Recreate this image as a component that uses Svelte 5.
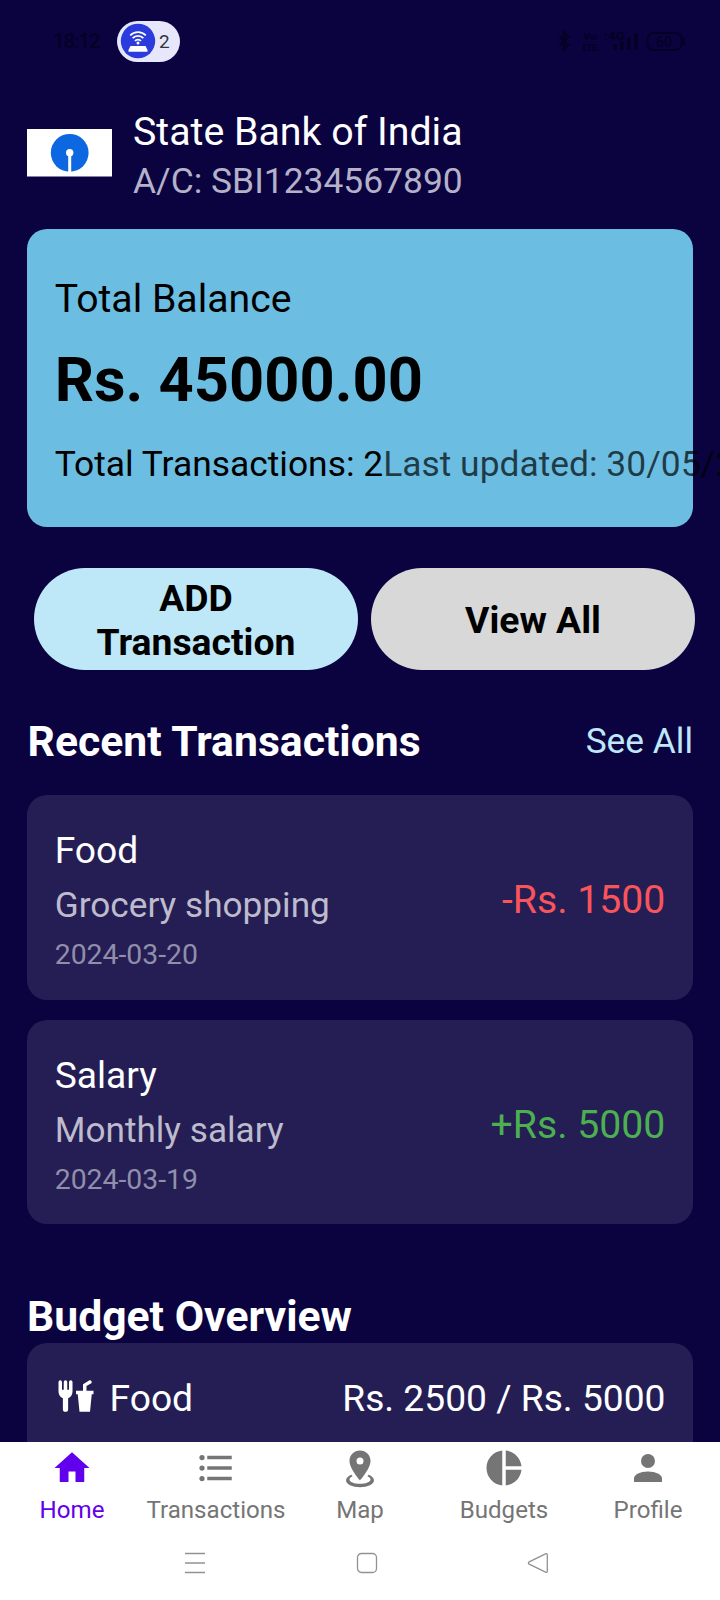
<script>
  const transactions = [
    { title: 'Food', note: 'Grocery shopping', date: '2024-03-20', amount: '-Rs. 1500', kind: 'debit' },
    { title: 'Salary', note: 'Monthly salary', date: '2024-03-19', amount: '+Rs. 5000', kind: 'credit' }
  ];

  const tabs = [
    { label: 'Home', active: true, path: 'M10,20V14H14V20H19V12H22L12,3L2,12H5V20H10Z' },
    {
      label: 'Transactions',
      path: 'M7,5H21V7H7V5M7,13V11H21V13H7M4,4.5A1.5,1.5 0 0,1 5.5,6A1.5,1.5 0 0,1 4,7.5A1.5,1.5 0 0,1 2.5,6A1.5,1.5 0 0,1 4,4.5M4,10.5A1.5,1.5 0 0,1 5.5,12A1.5,1.5 0 0,1 4,13.5A1.5,1.5 0 0,1 2.5,12A1.5,1.5 0 0,1 4,10.5M7,19V17H21V19H7M4,16.5A1.5,1.5 0 0,1 5.5,18A1.5,1.5 0 0,1 4,19.5A1.5,1.5 0 0,1 2.5,18A1.5,1.5 0 0,1 4,16.5Z'
    },
    {
      label: 'Map',
      path: 'M12,2C15.31,2 18,4.66 18,7.95C18,12.41 12,19 12,19S6,12.41 6,7.95C6,4.66 8.69,2 12,2M12,6A2,2 0 0,0 10,8A2,2 0 0,0 12,10A2,2 0 0,0 14,8A2,2 0 0,0 12,6M20,19C20,21.21 16.42,23 12,23C7.58,23 4,21.21 4,19C4,17.71 5.22,16.56 7.11,15.83L7.75,16.74C6.67,17.19 6,17.81 6,18.5C6,19.88 8.69,21 12,21C15.31,21 18,19.88 18,18.5C18,17.81 17.33,17.19 16.25,16.74L16.89,15.83C18.78,16.56 20,17.71 20,19Z'
    },
    {
      label: 'Budgets',
      path: 'M11,2V22C5.9,21.5 2,17.2 2,12C2,6.8 5.9,2.5 11,2M13,2V11H22C21.5,6.2 17.8,2.5 13,2M13,13V22C17.7,21.5 21.5,17.8 22,13H13Z'
    },
    {
      label: 'Profile',
      path: 'M12,4A4,4 0 0,1 16,8A4,4 0 0,1 12,12A4,4 0 0,1 8,8A4,4 0 0,1 12,4M12,14C16.42,14 20,15.79 20,18V20H4V18C4,15.79 7.58,14 12,14Z'
    }
  ];
</script>

<div class="screen">
  <div class="status">
    <span class="clock">18:12</span>
    <div class="pill">
      <svg width="36" height="36" viewBox="0 0 36 36">
        <circle cx="18" cy="18" r="17.2" fill="#2b3bdc" />
        <g fill="none" stroke="#fff" stroke-width="1.8">
          <path d="M10.2 12.4a11 11 0 0 1 15.6 0" />
          <path d="M12.6 15.2a7.6 7.6 0 0 1 10.8 0" />
          <path d="M15 17.9a4.2 4.2 0 0 1 6 0" />
        </g>
        <circle cx="18" cy="20" r="1.5" fill="#fff" />
        <path d="M10.500 23h15l2 4v1.700h-19v-1.700z" fill="#fff" />
      </svg>
      <span>2</span>
    </div>
    <svg class="signals" width="130" height="24" viewBox="0 0 130 24">
      <g fill="none" stroke="#050124" stroke-width="1.8">
        <path d="M3.500 7.500l9 8.500-4.700 4.700V3.300L12.500 8l-9 8.500" stroke-width="2.2" />
        <rect x="91.5" y="4" width="34" height="17" rx="6" />
        <path d="M127.700 9v7" stroke-width="2.5" />
      </g>
      <g fill="#050124">
        <rect x="57.5" y="15" width="3.5" height="6" />
        <rect x="64" y="12" width="3.5" height="9" />
        <rect x="71" y="8" width="3.5" height="13" />
        <rect x="78" y="4" width="3.5" height="17" />
        <text x="27" y="10.5" font-size="9.500" font-weight="900" textLength="14" lengthAdjust="spacingAndGlyphs">Vo</text>
        <text x="27" y="21.7" font-size="9.500" font-weight="900" textLength="14" lengthAdjust="spacingAndGlyphs">LTE</text>
        <text x="48" y="11" font-size="11" font-weight="900" textLength="21" lengthAdjust="spacingAndGlyphs">:4G</text>
        <text x="100" y="17.5" font-size="14" font-weight="500">60</text>
      </g>
    </svg>
  </div>

  <main>
    <header>
      <svg class="logo" width="85" height="48" viewBox="0 0 85 48">
        <rect width="85" height="47.5" fill="#fff" />
        <circle cx="42.7" cy="23.8" r="18.9" fill="#0d67e0" />
        <rect x="41.2" y="24" width="3" height="20" fill="#fff" />
        <circle cx="42.7" cy="23.8" r="3.7" fill="#fff" />
      </svg>
      <div>
        <div class="bank">State Bank of India</div>
        <div class="account">A/C: SBI1234567890</div>
      </div>
    </header>

    <section class="balance">
      <div class="label">Total Balance</div>
      <div class="total">Rs. 45000.00</div>
      <div class="meta"><span>Total Transactions: 2</span><span class="updated">Last updated: 30/05/2025</span></div>
    </section>

    <div class="actions">
      <button class="add">ADD<br />Transaction</button>
      <button class="view">View All</button>
    </div>

    <div class="heading">
      <h2>Recent Transactions</h2>
      <a href="#all">See All</a>
    </div>

    <div class="list">
      {#each transactions as t}
        <article>
          <div>
            <div class="title">{t.title}</div>
            <div class="note">{t.note}</div>
            <div class="date">{t.date}</div>
          </div>
          <div class="amount {t.kind}">{t.amount}</div>
        </article>
      {/each}
    </div>

    <h2 class="overview">Budget Overview</h2>
    <section class="budget">
      <svg width="42" height="42" viewBox="0 0 24 24" fill="#fff">
        <path
          d="M3,3A1,1 0 0,0 2,4V8L2,9.5C2,11.19 3.03,12.63 4.5,13.22V19.5A1.5,1.5 0 0,0 6,21A1.5,1.5 0 0,0 7.5,19.5V13.22C8.97,12.63 10,11.19 10,9.5V8L10,4A1,1 0 0,0 9,3A1,1 0 0,0 8,4V8A0.5,0.5 0 0,1 7.5,8.5A0.5,0.5 0 0,1 7,8V4A1,1 0 0,0 6,3A1,1 0 0,0 5,4V8A0.5,0.5 0 0,1 4.5,8.5A0.5,0.5 0 0,1 4,8V4A1,1 0 0,0 3,3M19.88,3C19.75,3 19.62,3.09 19.5,3.16L16,5.25V9H12V11H13L14,21H20L21,11H22V9H18V6.34L20.5,4.84C21,4.56 21.13,4 20.84,3.5C20.63,3.14 20.26,2.95 19.88,3Z"
        />
      </svg>
      <span class="name">Food</span>
      <span class="spent">Rs. 2500 / Rs. 5000</span>
    </section>
  </main>

  <nav>
    {#each tabs as tab}
      <div class="tab" class:active={tab.active}>
        <svg width="42" height="42" viewBox="0 0 24 24" fill="currentColor"><path d={tab.path} /></svg>
        <span>{tab.label}</span>
      </div>
    {/each}
  </nav>

  <div class="system">
    <svg width="22" height="22" viewBox="0 0 22 22"><path d="M1 1.500h20M1 11h20M1 20.500h20" /></svg>
    <svg class="square" width="22" height="22" viewBox="0 0 22 22"><rect x="1.5" y="1.5" width="19" height="19" rx="4" /></svg>
    <svg width="22" height="22" viewBox="0 0 22 22"><path d="M18.500 1.800 2.200 9.800q-1.600 1.200 0 2.400L18.500 20.200q1.800.4 1.800-1.200V3q0-1.600-1.800-1.200z" /></svg>
  </div>
</div>

<style>
  :global(body) { margin: 0; background: #0a0340; }
  .screen {
    width: 720px;
    height: 1600px;
    overflow: hidden;
    display: flex;
    flex-direction: column;
    background: #0a0340;
    color: #fff;
    font-family: Roboto, "Noto Sans", sans-serif;
    white-space: nowrap;
  }
  .status { height: 82px; flex: none; display: flex; align-items: center; padding: 0 34px 0 53px; box-sizing: border-box; }
  .clock { width: 64px; color: #050124; font-size: 20.5px; letter-spacing: -1.1px; font-weight: 500; }
  .pill { display: flex; align-items: center; width: 63px; height: 41px; padding-left: 3px; box-sizing: border-box; border-radius: 21px; background: #e6e7fb; color: #33343c; font-size: 19px; gap: 3px; }
  .signals { margin-left: auto; }

  main { height: 1359.5px; flex: none; padding: 26px 27px 0; box-sizing: border-box; overflow: hidden; }
  header { display: flex; gap: 21px; height: 121px; }
  .logo { margin-top: 20.5px; }
  .bank { font-size: 39.3px; line-height: 48.5px; }
  .account { font-size: 35.4px; line-height: 48px; color: #b5b1c9; }

  .balance { height: 297.5px; box-sizing: border-box; padding: 44.5px 27.7px 0; border-radius: 20px; background: #6cbde2; color: #000; }
  .label { font-size: 39.2px; line-height: 50px; }
  .total { margin-top: 18px; font-size: 61.4px; line-height: 76px; font-weight: 700; }
  .meta { display: flex; margin-top: 23px; font-size: 35.4px; line-height: 46px; }
  .updated { color: rgba(0, 0, 0, 0.7); }

  .actions { display: flex; gap: 13px; margin: 41.5px -2px 0 7px; }
  button { flex: 1; height: 102px; padding: 1px 0 0; border: 0; border-radius: 51px; color: #000; font: 700 37.3px/44px Roboto, sans-serif; }
  .add { background: #bee8f8; }
  .view { background: #d8d8d8; }

  h2 { margin: 0; font-size: 42.7px; line-height: 52px; font-weight: 700; }
  .heading { display: flex; justify-content: space-between; margin-top: 45.2px; }
  .heading h2 { padding-left: 0.6px; }
  a { color: #bee8f8; text-decoration: none; font-size: 35.3px; line-height: 52px; }

  .list { display: flex; flex-direction: column; gap: 20.2px; margin-top: 28.1px; }
  article { display: flex; justify-content: space-between; height: 204.5px; padding: 31px 27.7px 0; box-sizing: border-box; border-radius: 20px; background: #241e55; }
  .title { font-size: 37.2px; line-height: 48px; }
  .note { margin-top: 8.2px; font-size: 35.2px; line-height: 46px; color: #bdbbcc; }
  .date { margin-top: 8.6px; font-size: 28.4px; line-height: 36px; color: #918eaa; }
  .amount { margin-top: 49.8px; font-size: 39.2px; line-height: 48px; }
  .debit { color: #f8555a; }
  .credit { color: #4caf50; }

  .overview { margin-top: 65.5px; margin-bottom: 0.8px; }
  .budget { display: flex; height: 200px; padding: 31px 27.5px 0; box-sizing: border-box; border-radius: 20px; background: #241e55; font-size: 37.2px; line-height: 48px; }
  .budget svg { margin: 0.8px 13px 0 0; }
  .spent { margin-left: auto; }

  nav { flex: none; display: grid; grid-template-columns: repeat(5, 1fr); height: 90px; background: #fff; }
  .tab { display: flex; flex-direction: column; align-items: center; gap: 5.5px; padding-top: 5px; color: #757575; font-size: 24.1px; line-height: 32px; }
  .tab svg { margin-right: 1px; }
  .active { color: #6200ee; }
  .system { flex: 1; display: flex; justify-content: space-between; padding: 20px 171.5px 0 184px; background: #fff; }
  .system svg { fill: none; stroke: #929292; stroke-width: 1.3; }
  .system .square { margin-left: 1.5px; }
</style>
